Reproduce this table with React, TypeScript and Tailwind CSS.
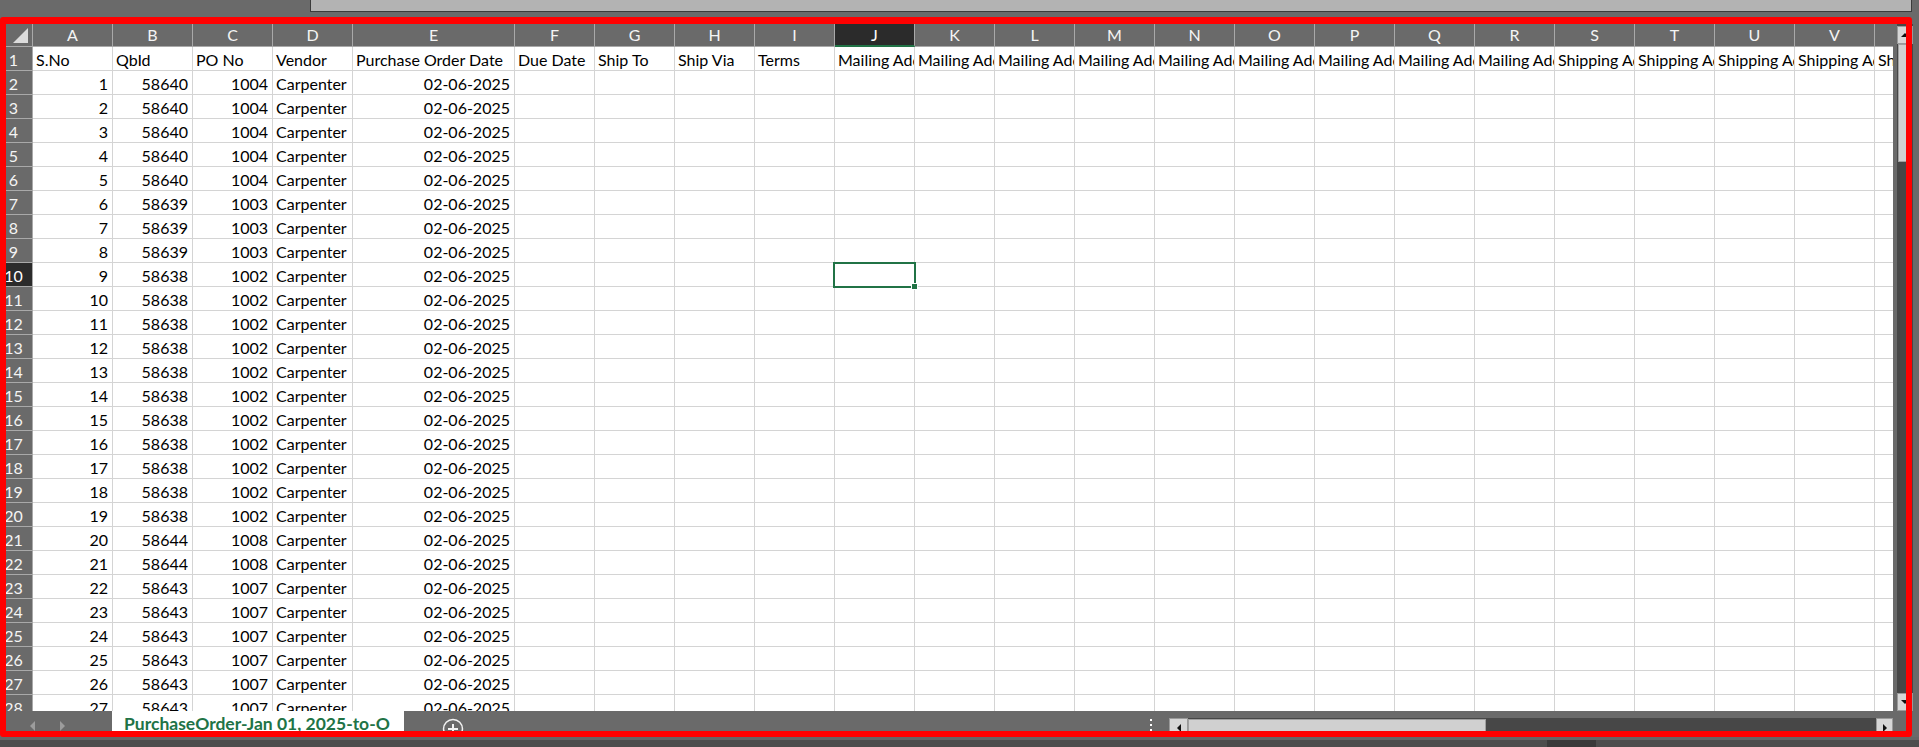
import React from "react";

type Col = { letter: string; label: string; wide?: boolean; align: "left" | "right" };

const COLS: Col[] = [
  { letter: "A", label: "S.No", align: "right" },
  { letter: "B", label: "QbId", align: "right" },
  { letter: "C", label: "PO No", align: "right" },
  { letter: "D", label: "Vendor", align: "left" },
  { letter: "E", label: "Purchase Order Date", wide: true, align: "right" },
  { letter: "F", label: "Due Date", align: "left" },
  { letter: "G", label: "Ship To", align: "left" },
  { letter: "H", label: "Ship Via", align: "left" },
  { letter: "I", label: "Terms", align: "left" },
  { letter: "J", label: "Mailing Address Line1", align: "left" },
  { letter: "K", label: "Mailing Address Line2", align: "left" },
  { letter: "L", label: "Mailing Address Line3", align: "left" },
  { letter: "M", label: "Mailing Address Line4", align: "left" },
  { letter: "N", label: "Mailing Address Line5", align: "left" },
  { letter: "O", label: "Mailing Address City", align: "left" },
  { letter: "P", label: "Mailing Address State", align: "left" },
  { letter: "Q", label: "Mailing Address Country", align: "left" },
  { letter: "R", label: "Mailing Address PostalCode", align: "left" },
  { letter: "S", label: "Shipping Address Line1", align: "left" },
  { letter: "T", label: "Shipping Address Line2", align: "left" },
  { letter: "U", label: "Shipping Address Line3", align: "left" },
  { letter: "V", label: "Shipping Address Line4", align: "left" },
  { letter: "W", label: "Shipping Address Line5", align: "left" },
];

// qbId / po number per S.No
function orderFor(n: number): [number, number] {
  if (n <= 5) return [58640, 1004];
  if (n <= 8) return [58639, 1003];
  if (n <= 19) return [58638, 1002];
  if (n <= 21) return [58644, 1008];
  return [58643, 1007];
}

const ROWS: string[][] = [
  COLS.map((c) => c.label),
  ...Array.from({ length: 27 }, (_, i) => {
    const n = i + 1;
    const [qb, po] = orderFor(n);
    return [String(n), String(qb), String(po), "Carpenter", "02-06-2025"];
  }),
];

const SELECTED_ROW = 10;
const SELECTED_COL = "J";

function ColumnHeader() {
  return (
    <div className="flex h-[23px] shrink-0">
      <div className="w-[33px] shrink-0 bg-[#6a6a6a] border-r border-b border-[#a9a9a9] relative">
        <svg width="17" height="16" viewBox="0 0 17 16" className="absolute left-[12px] top-[4px]">
          <polygon points="16,0 16,15 1,15" fill="#dcdcdc" />
        </svg>
      </div>
      {COLS.map((c) => {
        const sel = c.letter === SELECTED_COL;
        return (
          <div
            key={c.letter}
            className={`${c.wide ? "w-[162px]" : "w-[80px]"} shrink-0 flex items-center justify-center border-r border-[#a9a9a9] text-[16px] leading-[22px] ${
              sel
                ? "bg-[#2b2b2b] text-white border-b-2 border-b-[#217346]"
                : "bg-[#6a6a6a] text-[#f4f4f4] border-b border-b-[#a9a9a9]"
            }`}
          >
            {c.letter}
          </div>
        );
      })}
    </div>
  );
}

function Row({ num, cells }: { num: number; cells: string[] }) {
  const sel = num === SELECTED_ROW;
  return (
    <div className="flex h-[24px] shrink-0">
      <div
        className={`w-[33px] shrink-0 flex items-end justify-center pr-[5px] pb-[1px] border-r border-b border-[#a9a9a9] text-[16px] leading-[18px] ${
          sel ? "bg-[#2b2b2b] text-white" : "bg-[#6a6a6a] text-[#f4f4f4]"
        }`}
      >
        {num}
      </div>
      {COLS.map((c, i) => (
        <div
          key={c.letter}
          className={`${c.wide ? "w-[162px]" : "w-[80px]"} shrink-0 flex items-end overflow-hidden whitespace-nowrap bg-white border-r border-b border-[#d4d4d4] pb-[1px] text-[16px] leading-[18px] text-black ${
            c.align === "right" && num > 1 ? "justify-end pr-[4px]" : "justify-start pl-[3px]"
          }`}
        >
          {cells[i] ?? ""}
        </div>
      ))}
    </div>
  );
}

function Tri({ dir, color, size = 5 }: { dir: "up" | "down" | "left" | "right"; color: string; size?: number }) {
  const pts =
    dir === "up"
      ? `0,${size} ${size},0 ${size * 2},${size}`
      : dir === "down"
      ? `0,0 ${size * 2},0 ${size},${size}`
      : dir === "left"
      ? `${size},0 ${size},${size * 2} 0,${size}`
      : `0,0 0,${size * 2} ${size},${size}`;
  const w = dir === "up" || dir === "down" ? size * 2 : size;
  const h = dir === "up" || dir === "down" ? size : size * 2;
  return (
    <svg width={w} height={h} viewBox={`0 0 ${w} ${h}`}>
      <polygon points={pts} fill={color} />
    </svg>
  );
}

export default function App() {
  return (
    <div className="w-[1919px] h-[747px] relative overflow-hidden bg-[#6a6a6a] font-['Lato',sans-serif] flex flex-col">
      {/* formula area strip */}
      <div className="h-[24px] shrink-0 bg-[#6a6a6a]">
        <div className="ml-[310px] w-[1602px] h-[12px] bg-[#b3b3b3] border-l border-r border-b border-[#3b3b3b]" />
      </div>

      {/* sheet + vertical scrollbar */}
      <div className="flex h-[687px] shrink-0">
        <div className="w-[1893px] shrink-0 overflow-hidden relative bg-white">
          <div className="flex flex-col w-max">
            <ColumnHeader />
            {ROWS.map((cells, i) => (
              <Row key={i} num={i + 1} cells={cells} />
            ))}
          </div>
          {/* active cell J10 */}
          <div className="absolute left-[833px] top-[238px] w-[83px] h-[26px] border-2 border-[#217346]" />
          <div className="absolute left-[911px] top-[259px] w-[7px] h-[7px] bg-[#217346] border border-white" />
        </div>
        <div className="w-[26px] shrink-0 flex bg-[#6a6a6a]">
          <div className="w-[4px]" />
          <div className="w-[16px] flex flex-col bg-[#474747]">
            <div className="h-[18px] mt-[2px] bg-[#d6d6d6] border border-[#9a9a9a] flex items-center justify-center">
              <Tri dir="up" color="#111" size={4} />
            </div>
            <div className="h-[118px] mx-[1px] bg-[#d0d0d0] border border-[#a0a0a0]" />
            <div className="flex-1" />
            <div className="h-[18px] bg-[#d6d6d6] border border-[#9a9a9a] flex items-center justify-center">
              <Tri dir="down" color="#111" size={4} />
            </div>
          </div>
        </div>
      </div>

      {/* sheet tabs + horizontal scrollbar */}
      <div className="flex h-[26px] shrink-0 bg-[#6a6a6a]">
        <div className="w-[112px] shrink-0 flex items-center pt-[4px]">
          <div className="ml-[30px]">
            <Tri dir="left" color="#9c9c9c" size={5} />
          </div>
          <div className="ml-[25px]">
            <Tri dir="right" color="#9c9c9c" size={5} />
          </div>
        </div>
        <div className="w-[292px] h-[22px] shrink-0 bg-white border-b-2 border-[#217346] pl-[12px] text-[17.5px] font-bold leading-[26px] text-[#217346] whitespace-nowrap overflow-hidden">
          PurchaseOrder-Jan 01, 2025-to-O
        </div>
        <div className="w-[98px] shrink-0 flex justify-center pt-[7px]">
          <svg width="22" height="22" viewBox="0 0 22 22">
            <circle cx="11" cy="11" r="9.5" fill="none" stroke="#f2f2f2" strokeWidth="1.5" />
            <path d="M11 6v10M6 11h10" stroke="#f2f2f2" strokeWidth="2" />
          </svg>
        </div>
        <div className="w-[643px] shrink-0" />
        <div className="w-[12px] shrink-0 flex flex-col items-center gap-[3px] pt-[8px]">
          <div className="w-[2px] h-[2px] bg-white" />
          <div className="w-[2px] h-[2px] bg-white" />
          <div className="w-[2px] h-[2px] bg-white" />
        </div>
        <div className="w-[12px] shrink-0" />
        <div className="w-[724px] h-[19px] mt-[7px] shrink-0 flex bg-[#474747]">
          <div className="w-[19px] bg-[#d6d6d6] border border-[#9a9a9a] flex items-center justify-center">
            <Tri dir="left" color="#111" size={4} />
          </div>
          <div className="w-[298px] my-[1px] bg-[#d0d0d0] border border-[#a0a0a0]" />
          <div className="flex-1" />
          <div className="w-[17px] bg-[#d6d6d6] border border-[#9a9a9a] flex items-center justify-center">
            <Tri dir="right" color="#111" size={4} />
          </div>
        </div>
      </div>

      {/* status strip */}
      <div className="h-[10px] shrink-0 bg-[#4d4d4d] border-t-[3px] border-[#666666] flex">
        <div className="ml-[1547px] w-[49px] h-full bg-[#3a3a3a]" />
      </div>

      {/* red annotation frame */}
      <div className="absolute left-0 top-[17px] w-[1912px] h-[720px] border-x-[6px] border-b-[6px] border-t-[7px] border-[#ff0000] rounded-[3px] pointer-events-none" />
    </div>
  );
}
